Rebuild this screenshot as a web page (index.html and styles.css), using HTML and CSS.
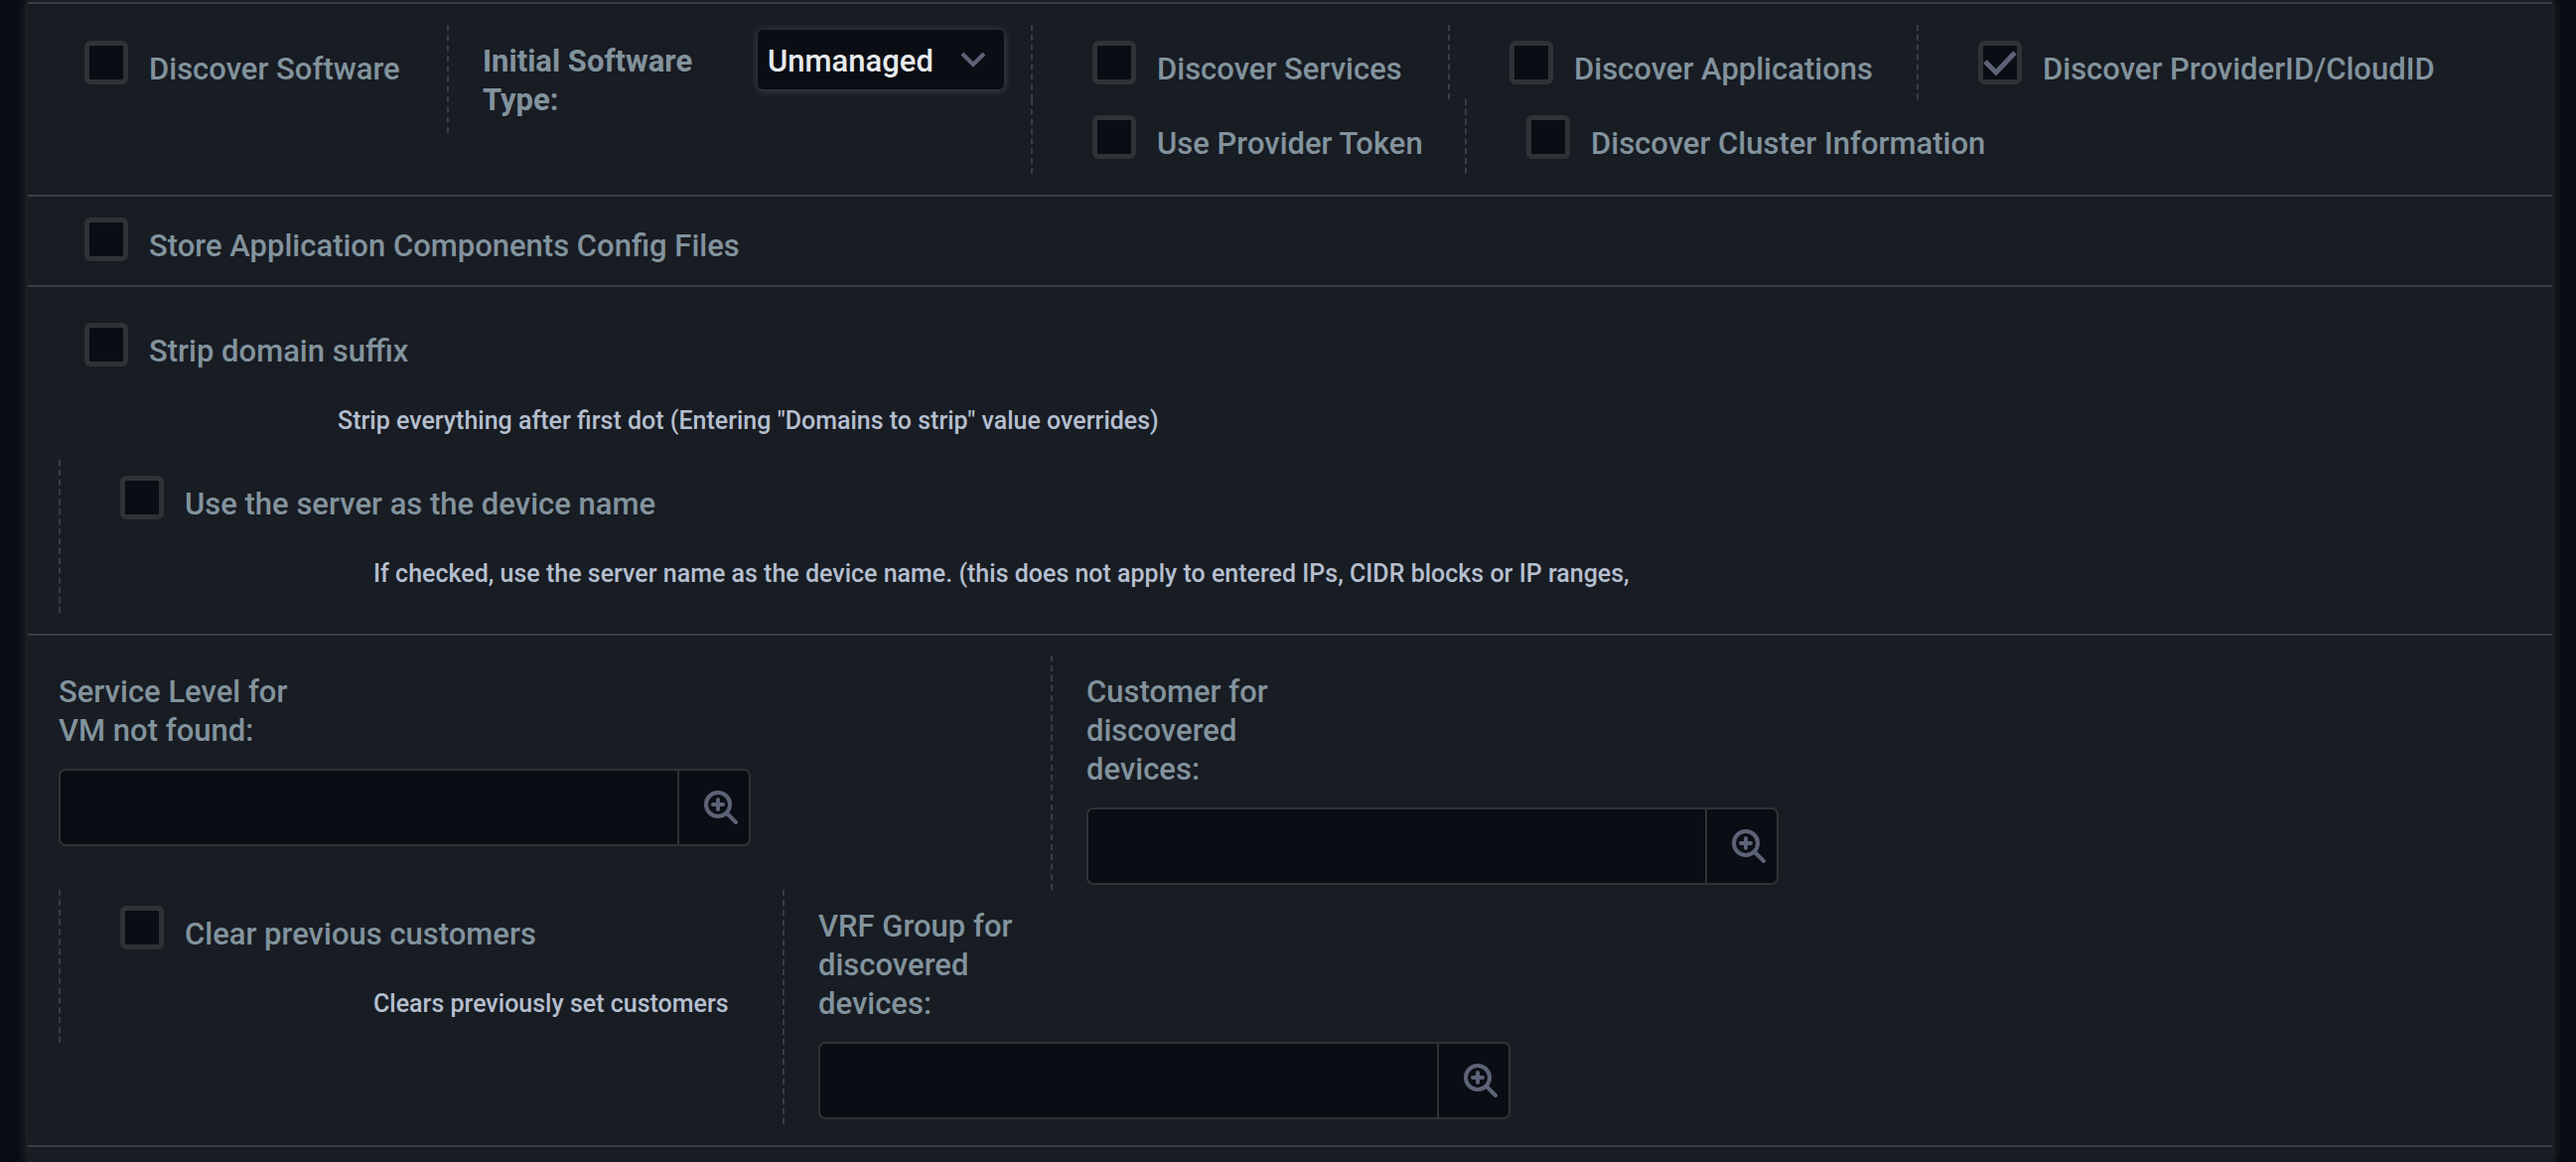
FILE: index.html
```html
<!DOCTYPE html>
<html lang="en">
<head>
<meta charset="utf-8">
<title>Discovery settings</title>
<link rel="stylesheet" href="styles.css">
</head>
<body>
<svg class="sprite" aria-hidden="true">
  <symbol id="icon-lookup" viewBox="0 0 34 34">
    <circle cx="14" cy="14" r="12" fill="none" stroke="currentColor" stroke-width="4"/>
    <path d="M14 9v10M9 14h10M23 23l9 9" fill="none" stroke="currentColor" stroke-width="4" stroke-linecap="round"/>
  </symbol>
</svg>
<form class="panel">
  <section class="section section-first">
    <div class="row">
      <div class="item item-software"><label class="check"><input type="checkbox"><span>Discover Software</span></label></div>
      <div class="item divided item-type">
        <label class="field-label" for="type">Initial Software Type:</label>
        <div class="select">
          <select id="type"><option>Unmanaged</option></select>
          <svg class="chevron" viewBox="0 0 26 16" aria-hidden="true"><path d="M2 2l11 11L24 2" fill="none" stroke="currentColor" stroke-width="4"/></svg>
        </div>
      </div>
      <div class="stack">
        <div class="row">
          <div class="item divided item-services"><label class="check"><input type="checkbox"><span>Discover Services</span></label></div>
          <div class="item divided item-applications"><label class="check"><input type="checkbox"><span>Discover Applications</span></label></div>
          <div class="item divided"><label class="check"><input type="checkbox" checked><span>Discover ProviderID/CloudID</span></label></div>
        </div>
        <div class="row">
          <div class="item divided item-token"><label class="check"><input type="checkbox"><span>Use Provider Token</span></label></div>
          <div class="item divided"><label class="check"><input type="checkbox"><span>Discover Cluster Information</span></label></div>
        </div>
      </div>
    </div>
  </section>
  <section class="section section-compact">
    <div class="item"><label class="check"><input type="checkbox"><span>Store Application Components Config Files</span></label></div>
  </section>
  <section class="section">
    <div class="item">
      <label class="check"><input type="checkbox" aria-describedby="strip-help"><span>Strip domain suffix</span></label>
      <p class="help" id="strip-help">Strip everything after first dot (Entering "Domains to strip" value overrides)</p>
    </div>
    <div class="item divided">
      <label class="check"><input type="checkbox" aria-describedby="name-help"><span>Use the server as the device name</span></label>
      <p class="help" id="name-help">If checked, use the server name as the device name. (this does not apply to entered IPs, CIDR blocks or IP ranges,</p>
    </div>
  </section>
  <section class="section">
    <div class="row">
      <div class="item item-level">
        <label class="field-label" for="level">Service Level for VM not found:</label>
        <div class="lookup"><input id="level" type="text"><button type="button" aria-label="Look up service level"><svg><use href="#icon-lookup"/></svg></button></div>
      </div>
      <div class="item divided">
        <label class="field-label" for="customer">Customer for discovered devices:</label>
        <div class="lookup"><input id="customer" type="text"><button type="button" aria-label="Look up customer"><svg><use href="#icon-lookup"/></svg></button></div>
      </div>
    </div>
    <div class="row">
      <div class="item divided item-clear">
        <label class="check"><input type="checkbox" aria-describedby="clear-help"><span>Clear previous customers</span></label>
        <p class="help" id="clear-help">Clears previously set customers</p>
      </div>
      <div class="item divided">
        <label class="field-label" for="vrf">VRF Group for discovered devices:</label>
        <div class="lookup"><input id="vrf" type="text"><button type="button" aria-label="Look up VRF group"><svg><use href="#icon-lookup"/></svg></button></div>
      </div>
    </div>
  </section>
</form>
</body>
</html>
```
FILE: styles.css
```css
* {
  box-sizing: border-box;
}

body {
  margin: 0;
  padding: 0 24px 0 28px;
  background: #0a0d14;
  color: #82939d;
  font: 500 31px/39px Roboto, "Liberation Sans", sans-serif;
}

.sprite {
  display: none;
}

.panel {
  min-height: 100vh;
  padding-top: 2px;
  background: #181c23;
  box-shadow: 0 0 10px #3a3a3a;
}

.section {
  padding: 20px 31px 21px;
  border-top: 2px solid #3a3d45;
}

.section:last-child {
  border-bottom: 2px solid #3a3d45;
}

.section-first {
  padding-top: 21px;
}

.section-compact {
  padding: 5px 31px 9px;
}

.row {
  display: flex;
  align-items: flex-start;
}

.divided {
  padding-left: 34px;
  border-left: 2px dashed #3a3d45;
}

.item-software { width: 391px; }
.item-services { width: 420px; }
.item-applications { width: 472px; }
.item-token { width: 437px; }
.item-level { width: 999px; }
.item-clear { width: 729px; }

.item-type {
  display: flex;
  justify-content: space-between;
  width: 588px;
  padding-right: 27px;
}

.item-type .field-label {
  font-weight: 700;
}

.check {
  display: flex;
  gap: 21px;
  padding: 16px 0 15px 26px;
}

.check span {
  padding-top: 14px;
  line-height: 30px;
  white-space: nowrap;
}

.check input {
  appearance: none;
  flex: none;
  width: 44px;
  height: 44px;
  margin: 0;
  border: 5px solid #303236;
  border-radius: 6px;
  background: #0a0d14;
}

.check input:checked {
  background: #0a0d14 url("data:image/svg+xml,%3Csvg xmlns='http://www.w3.org/2000/svg' viewBox='0 0 34 34'%3E%3Cpath d='M2 16l11 11L32 7' fill='none' stroke='%235c6376' stroke-width='5'/%3E%3C/svg%3E");
}

.help {
  margin: 0;
  padding: 22px 0 21px 281px;
  color: #b5bfcf;
  font-size: 25px;
  line-height: 36px;
}

.field-label {
  display: block;
  width: 240px;
  padding: 17px 0 14px;
}

.select {
  position: relative;
  width: 248px;
  margin-top: 5px;
}

.select select {
  appearance: none;
  width: 100%;
  height: 60px;
  padding: 2px 10px 0;
  border: 0;
  border-radius: 5px;
  background: #0a0d14;
  box-shadow: 0 1px 8px #4a4b50;
  color: #e8eaec;
  font: inherit;
}

.chevron {
  position: absolute;
  top: 22px;
  right: 18px;
  width: 26px;
  height: 16px;
  color: #5c6376;
  pointer-events: none;
}

.lookup {
  display: flex;
  width: 697px;
  height: 78px;
  margin: 5px 0;
  border: 2px solid #303236;
  border-radius: 7px;
  background: #0a0d14;
}

.lookup input {
  flex: 1;
  min-width: 0;
  padding: 0 16px;
  border: 0;
  background: none;
  color: #e8eaec;
  font: inherit;
}

.lookup button {
  display: grid;
  place-items: center end;
  width: 72px;
  padding: 0 11px;
  border: 0;
  border-left: 2px solid #303236;
  background: none;
  color: #5c6376;
}

.lookup svg {
  width: 34px;
  height: 34px;
}
```
